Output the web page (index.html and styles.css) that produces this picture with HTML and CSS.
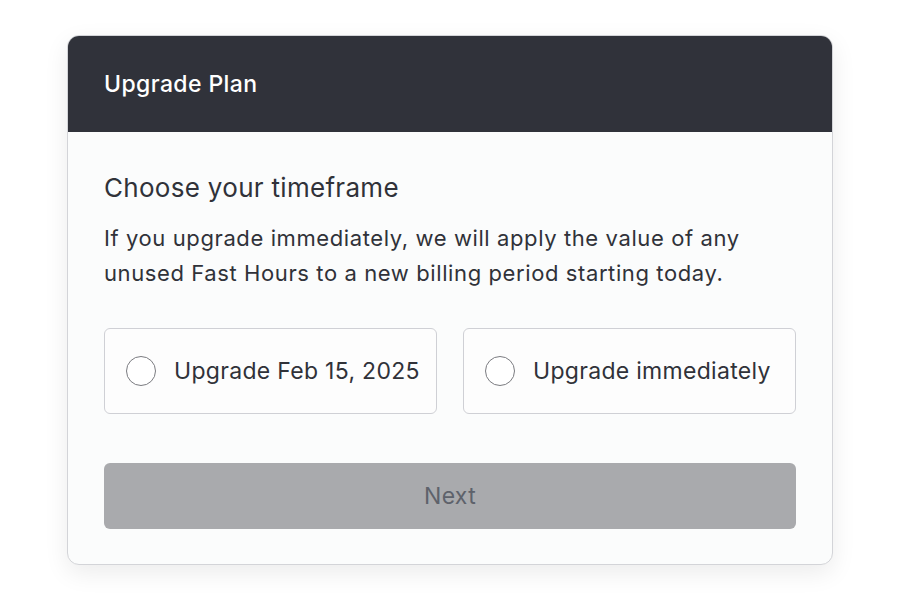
FILE: index.html
```html
<!DOCTYPE html>
<html lang="en">
<head>
<meta charset="utf-8">
<title>Upgrade Plan</title>
<link rel="stylesheet" href="styles.css">
</head>
<body>
<div class="page">
  <div class="card">
    <div class="card-header">
      <h1 class="card-title">Upgrade Plan</h1>
    </div>
    <div class="card-body">
      <h2 class="section-title">Choose your timeframe</h2>
      <p class="description">If you upgrade immediately, we will apply the value of any unused Fast Hours to a new billing period starting today.</p>
      <div class="options">
        <label class="option">
          <span class="radio"></span>
          <span class="option-label">Upgrade Feb 15, 2025</span>
        </label>
        <label class="option">
          <span class="radio"></span>
          <span class="option-label">Upgrade immediately</span>
        </label>
      </div>
      <button class="next-button" disabled>Next</button>
    </div>
  </div>
</div>
</body>
</html>
```

FILE: styles.css
```css
* { box-sizing: border-box; }
html, body {
  margin: 0;
  padding: 0;
  background: #ffffff;
  font-family: Inter, "Noto Sans", sans-serif;
  color: #303239;
}
.page {
  width: 900px;
  height: 600px;
  padding-top: 35px;
  padding-left: 67px;
}
.card {
  width: 766px;
  height: 530px;
  border: 1px solid #d3d4d8;
  border-radius: 12px;
  overflow: hidden;
  background: #fbfcfc;
  box-shadow: 0 8px 24px rgba(0, 0, 0, 0.08);
  display: flex;
  flex-direction: column;
}
.card-header {
  background: #30323a;
  height: 96px;
  display: flex;
  align-items: center;
  padding: 0 36px;
  flex-shrink: 0;
}
.card-title {
  margin: 0;
  font-size: 23px;
  font-weight: 500;
  color: #ffffff;
  letter-spacing: 0.4px;
}
.card-body {
  padding: 40px 36px 36px;
  display: flex;
  flex-direction: column;
}
.section-title {
  margin: 0;
  font-size: 26px;
  font-weight: 400;
  line-height: 32px;
  letter-spacing: 0.3px;
}
.description {
  margin: 17px 0 0;
  font-size: 22px;
  line-height: 35px;
  letter-spacing: 0.6px;
}
.options {
  margin-top: 37px;
  display: grid;
  grid-template-columns: 1fr 1fr;
  gap: 26px;
}
.option {
  height: 86px;
  border: 1px solid #cfd0d5;
  border-radius: 6px;
  background: #fdfdfd;
  display: flex;
  align-items: center;
  padding-left: 21px;
  gap: 18px;
}
.radio {
  width: 30px;
  height: 30px;
  border: 1.5px solid #7a7b80;
  border-radius: 50%;
  flex-shrink: 0;
  background: #ffffff;
}
.option-label {
  font-size: 23px;
  letter-spacing: 0.3px;
}
.next-button {
  margin-top: 49px;
  height: 66px;
  border: none;
  border-radius: 6px;
  background: #a9aaad;
  color: #5e626b;
  font-family: Inter, "Noto Sans", sans-serif;
  font-size: 23px;
  letter-spacing: 0.3px;
  width: 100%;
}
```
